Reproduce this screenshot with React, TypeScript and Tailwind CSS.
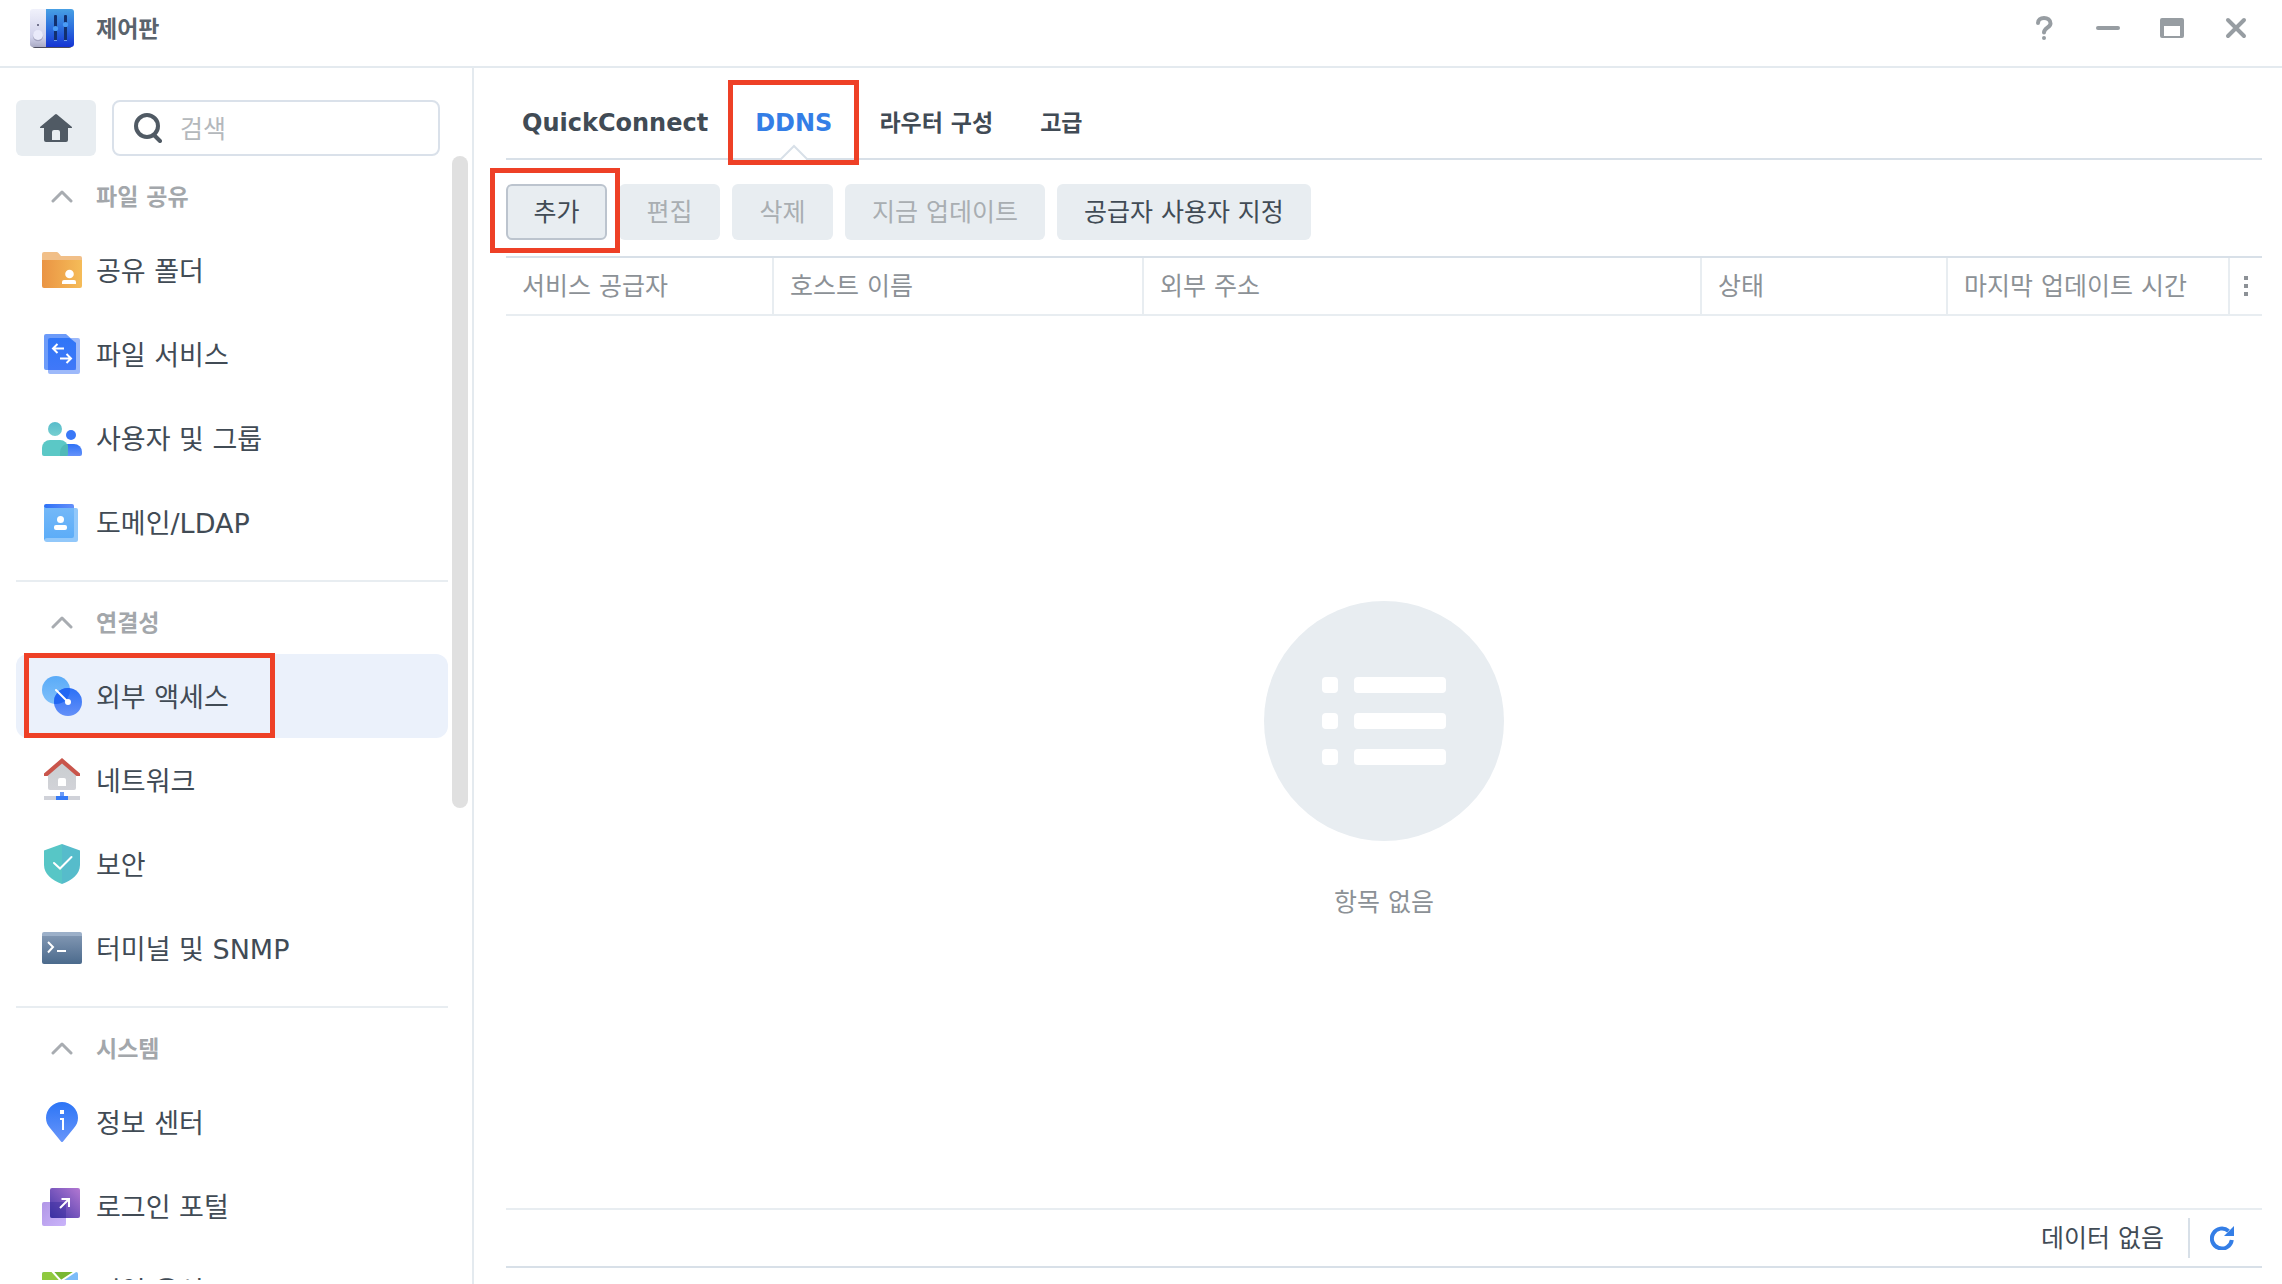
import type { ReactNode } from "react";

function ControlPanelLogo() {
  return (
    <svg width="44" height="42" viewBox="0 0 44 42" aria-hidden="true">
      <defs>
        <linearGradient id="cpLeft" x1="0" y1="0" x2="0" y2="1">
          <stop offset="0" stopColor="#f0f1fb" />
          <stop offset="0.75" stopColor="#d0d1ea" />
          <stop offset="1" stopColor="#a9aac4" />
        </linearGradient>
        <linearGradient id="cpRight" x1="0" y1="0" x2="0" y2="1">
          <stop offset="0" stopColor="#48a0e4" />
          <stop offset="0.5" stopColor="#2c6fdd" />
          <stop offset="1" stopColor="#1534d3" />
        </linearGradient>
      </defs>
      <rect x="2" y="33" width="40" height="6" rx="3" fill="#4c4c5c" />
      <path d="M16 0H3a3 3 0 0 0-3 3v32a3 3 0 0 0 3 3h13z" fill="url(#cpLeft)" />
      <path d="M16 0h25a3 3 0 0 1 3 3v32a3 3 0 0 1-3 3H16z" fill="url(#cpRight)" />
      <rect x="7" y="15" width="2" height="2" fill="#74758f" />
      <circle cx="8" cy="27" r="5.2" fill="#a3a4bf" />
      <circle cx="8" cy="26" r="5" fill="#e9eafa" />
      <rect x="24" y="6" width="3" height="26" rx="1" fill="#12306e" />
      <rect x="34" y="6" width="3" height="26" rx="1" fill="#12306e" />
      <circle cx="25.500" cy="19.500" r="2.600" fill="#4a9cf5" />
      <circle cx="35.500" cy="15.500" r="2.600" fill="#4a9cf5" />
      <rect x="24" y="31" width="3" height="1" fill="#7aa0e8" />
      <rect x="34" y="31" width="3" height="1" fill="#7aa0e8" />
    </svg>
  );
}

/* Sidebar icons share a 40 x 44 drawing area. */
function Icon({ children }: { children: ReactNode }) {
  return (
    <svg width="40" height="44" viewBox="0 0 40 44" fill="none" className="shrink-0" aria-hidden="true">
      {children}
    </svg>
  );
}

const SharedFolderIcon = (
  <Icon>
    <defs>
      <linearGradient id="sf" x1="0" x2="1" y1="0" y2="0">
        <stop stopColor="#ea9444" />
        <stop offset="1" stopColor="#f5bc58" />
      </linearGradient>
    </defs>
    <path d="M0 12V6a2 2 0 0 1 2-2h12.500a3 3 0 0 1 2 1L19 8h19a2 2 0 0 1 2 2v2z" fill="#f1bf88" />
    <path d="M0 12h40v26a2 2 0 0 1-2 2H2a2 2 0 0 1-2-2z" fill="url(#sf)" />
    <circle cx="27.500" cy="26" r="4.300" fill="#fff" />
    <path d="M20 36v-2a2 2 0 0 1 2-2h10a2 2 0 0 1 2 2v2z" fill="#fff" />
  </Icon>
);

const FileServiceIcon = (
  <Icon>
    <defs>
      <linearGradient id="fs" x1="0" x2="0" y1="0" y2="1">
        <stop stopColor="#2f75f7" />
        <stop offset="1" stopColor="#4078f8" />
      </linearGradient>
    </defs>
    <rect x="6" y="6" width="32" height="36" rx="2" fill="#9db9fa" />
    <path d="M4 2h20l10 9v27H4a2 2 0 0 1-2-2V4a2 2 0 0 1 2-2z" fill="#6c9bf9" />
    <path d="M8 6h19.500L34 11v25a2 2 0 0 1-2 2H6V8a2 2 0 0 1 2-2z" fill="url(#fs)" />
    <path d="M22 16.500H11M15.500 12 11 16.500l4.500 4.500M18 26.500h11M24.500 22l4.500 4.500-4.500 4.500" stroke="#fff" strokeWidth="2" />
  </Icon>
);

const UsersIcon = (
  <Icon>
    <defs>
      <linearGradient id="uh" x1="0" x2="0" y1="0" y2="1">
        <stop stopColor="#58bccb" />
        <stop offset="1" stopColor="#76cfd0" />
      </linearGradient>
      <linearGradient id="ub" x1="0" x2="0" y1="0" y2="1">
        <stop stopColor="#2e72f6" />
        <stop offset="1" stopColor="#6592fa" />
      </linearGradient>
    </defs>
    <circle cx="13" cy="13" r="7" fill="url(#uh)" />
    <circle cx="29" cy="19" r="5" fill="#3a78f7" />
    <path d="M18 40v-4a8 8 0 0 1 8-8h6a8 8 0 0 1 8 8v2a2 2 0 0 1-2 2z" fill="url(#ub)" />
    <path d="M0 38v-6a8 8 0 0 1 8-8h10a8 8 0 0 1 8 8v6a2 2 0 0 1-2 2H2a2 2 0 0 1-2-2z" fill="#5bc8c6" />
    <path d="M18 40v-4a8 8 0 0 1 7-7.900 8 8 0 0 1 1 3.900v6a2 2 0 0 1-2 2z" fill="#50b9b8" />
  </Icon>
);

const DomainIcon = (
  <Icon>
    <defs>
      <linearGradient id="dm" x1="0" x2="0" y1="0" y2="1">
        <stop stopColor="#75b9f8" />
        <stop offset="1" stopColor="#5bacf8" />
      </linearGradient>
      <linearGradient id="dt" x1="0" x2="1" y1="0" y2="0">
        <stop stopColor="#2d71f6" />
        <stop offset="1" stopColor="#648ffa" />
      </linearGradient>
    </defs>
    <path d="M4 4h26a2 2 0 0 1 2 2v4H2V6a2 2 0 0 1 2-2z" fill="url(#dt)" />
    <path d="M2 7q0 1 2 1h30a2 2 0 0 1 2 2v30a2 2 0 0 1-2 2H5a3 3 0 0 1-3-3z" fill="#92c8fa" />
    <path d="M2 6q0 2 2 2h28v28a2 2 0 0 1-2 2H5q-2 0-3 2z" fill="url(#dm)" />
    <circle cx="18.500" cy="19.500" r="3.500" fill="#fff" />
    <path d="M12 28v-1q0-2 2-2h9q2 0 2 2v1q0 2-2 2h-9q-2 0-2-2z" fill="#fff" />
  </Icon>
);

const ExternalAccessIcon = (
  <Icon>
    <defs>
      <linearGradient id="ea" x1="0" x2="0" y1="0" y2="1">
        <stop stopColor="#5aabf8" />
        <stop offset="1" stopColor="#7fc0fa" />
      </linearGradient>
      <linearGradient id="eb" x1="0" x2="0" y1="0" y2="1">
        <stop stopColor="#2b70f6" />
        <stop offset="1" stopColor="#6490f8" />
      </linearGradient>
      <clipPath id="ec">
        <circle cx="14" cy="16" r="14" />
      </clipPath>
    </defs>
    <circle cx="14" cy="16" r="14" fill="url(#ea)" />
    <circle cx="26" cy="28" r="14" fill="url(#eb)" />
    <circle cx="26" cy="28" r="14" fill="#2166f3" clipPath="url(#ec)" />
    <path d="m14 16 12 12" stroke="#fff" strokeWidth="2" strokeLinecap="round" />
    <circle cx="26" cy="28" r="3" fill="#fff" />
  </Icon>
);

const NetworkIcon = (
  <Icon>
    <defs>
      <linearGradient id="nw" x1="0" x2="0" y1="0" y2="1">
        <stop stopColor="#c9cdd0" />
        <stop offset="1" stopColor="#d2d3d8" />
      </linearGradient>
    </defs>
    <path d="M6 16 20 4l14 12v14a2 2 0 0 1-2 2H8a2 2 0 0 1-2-2z" fill="url(#nw)" />
    <path d="M2 18v-2.500L20 0l18 15.500V18h-3.500L20 5.500 5.500 18z" fill="#c9554b" />
    <path d="M16 28v-6a2 2 0 0 1 2-2h4a2 2 0 0 1 2 2v6z" fill="#fff" />
    <path d="M2 38h36v4H2z" fill="#d0d2d9" />
    <path d="M18 34h4v4h-4z" fill="#6c9bf8" />
    <path d="M14 38h12v4H14z" fill="#357af6" />
  </Icon>
);

const SecurityIcon = (
  <Icon>
    <path d="M20 2 2 8.500V23c0 9 8 15.500 18 19z" fill="#57c6c6" />
    <path d="m20 2 18 6.500V23c0 9-8 15.500-18 19z" fill="#56bccb" />
    <path d="m12 21 6 5.500L29.500 15" stroke="#fff" strokeWidth="2" strokeLinecap="round" />
  </Icon>
);

const TerminalIcon = (
  <Icon>
    <defs>
      <linearGradient id="tm" x1="0" x2="0" y1="0" y2="1">
        <stop stopColor="#7f95b1" />
        <stop offset="1" stopColor="#4b6a8c" />
      </linearGradient>
    </defs>
    <path d="M0 10V8a2 2 0 0 1 2-2h36a2 2 0 0 1 2 2v2z" fill="#9cb0c9" />
    <path d="M0 10h40v26a2 2 0 0 1-2 2H2a2 2 0 0 1-2-2z" fill="url(#tm)" />
    <path d="m6 16 5 5-5 5.500M15 25h9" stroke="#fff" strokeWidth="2" />
  </Icon>
);

const InfoIcon = (
  <Icon>
    <defs>
      <linearGradient id="if" x1="0" x2="0" y1="0" y2="1">
        <stop stopColor="#2c75f6" />
        <stop offset="1" stopColor="#6996fa" />
      </linearGradient>
    </defs>
    <path d="M20 2a16 16 0 0 1 16 16c0 4-1.500 7-4 10L21 41.500q-1 1-2 0L8 28c-2.500-3-4-6-4-10A16 16 0 0 1 20 2z" fill="url(#if)" />
    <path d="M18 10h4v4h-4zM18 18h4v12h-2V20h-2z" fill="#fff" />
  </Icon>
);

const LoginPortalIcon = (
  <Icon>
    <defs>
      <linearGradient id="lp" x1="0" x2="1" y1="1" y2="0">
        <stop stopColor="#4036a8" />
        <stop offset="1" stopColor="#b378d2" />
      </linearGradient>
      <linearGradient id="lq" x1="0" x2="1" y1="0" y2="1">
        <stop stopColor="#b196e6" />
        <stop offset="1" stopColor="#cab4fa" />
      </linearGradient>
    </defs>
    <rect x="0" y="18" width="24" height="24" rx="2" fill="url(#lq)" />
    <rect x="8" y="4" width="30" height="30" rx="2" fill="url(#lp)" />
    <path d="M8 18h14a2 2 0 0 1 2 2v14H10a2 2 0 0 1-2-2z" fill="#33279a" fillOpacity="0.400" />
    <path d="m18 24 9-9M19.500 15H27v8" stroke="#fff" strokeWidth="2" />
  </Icon>
);

const RegionIcon = (
  <Icon>
    <rect x="0" y="4" width="36" height="36" rx="2" fill="#7cbcf8" />
    <path d="M2 4h10l7 9L4 40H2a2 2 0 0 1-2-2V6a2 2 0 0 1 2-2z" fill="#8fc93f" />
    <path d="M12 4h20L20 14z" fill="#78b833" />
    <path d="m10 3 9 10L34 3" stroke="#fff" strokeWidth="2" />
  </Icon>
);

type NavItem = { label: string; icon: ReactNode; active?: boolean };

const groups: { title: string; items: NavItem[] }[] = [
  {
    title: "파일 공유",
    items: [
      { label: "공유 폴더", icon: SharedFolderIcon },
      { label: "파일 서비스", icon: FileServiceIcon },
      { label: "사용자 및 그룹", icon: UsersIcon },
      { label: "도메인/LDAP", icon: DomainIcon },
    ],
  },
  {
    title: "연결성",
    items: [
      { label: "외부 액세스", icon: ExternalAccessIcon, active: true },
      { label: "네트워크", icon: NetworkIcon },
      { label: "보안", icon: SecurityIcon },
      { label: "터미널 및 SNMP", icon: TerminalIcon },
    ],
  },
  {
    title: "시스템",
    items: [
      { label: "정보 센터", icon: InfoIcon },
      { label: "로그인 포털", icon: LoginPortalIcon },
      { label: "지역 옵션", icon: RegionIcon },
    ],
  },
];

function TitleBar() {
  return (
    <header className="flex h-[68px] shrink-0 items-center justify-between border-b-2 border-[#e4eaef] pr-[30px] pl-[30px]">
      <div className="flex items-center gap-[22px] pb-1.5">
        <ControlPanelLogo />
        <h1 className="pb-0.5 text-[23px] leading-8 font-bold text-[#5a636c]">제어판</h1>
      </div>
      <div className="flex items-center gap-8 pb-[10px] text-[#979da2]">
        <button type="button" aria-label="도움말" className="size-8">
          <svg width="32" height="32" viewBox="0 0 32 32" fill="none" stroke="currentColor" strokeWidth="4" strokeLinecap="round">
            <path d="M10 11c0-3 2.500-5 6-5s6.500 2 6.500 5.500c0 4-6.500 4.500-6.500 9" />
            <path d="M16 26v.01" />
          </svg>
        </button>
        <button type="button" aria-label="최소화" className="size-8">
          <svg width="32" height="32" viewBox="0 0 32 32" fill="currentColor">
            <rect x="4" y="14" width="24" height="4" rx="2" />
          </svg>
        </button>
        <button type="button" aria-label="최대화" className="size-8">
          <svg width="32" height="32" viewBox="0 0 32 32" fill="currentColor">
            <path fillRule="evenodd" d="M6 6h20a2 2 0 0 1 2 2v16a2 2 0 0 1-2 2H6a2 2 0 0 1-2-2V8a2 2 0 0 1 2-2zm2 8v10h16V14z" />
          </svg>
        </button>
        <button type="button" aria-label="닫기" className="size-8">
          <svg width="32" height="32" viewBox="0 0 32 32" fill="none" stroke="currentColor" strokeWidth="4" strokeLinecap="round">
            <path d="m8 8 16 16M24 8 8 24" />
          </svg>
        </button>
      </div>
    </header>
  );
}

function Sidebar() {
  return (
    <aside className="flex w-[474px] shrink-0 flex-col border-r-2 border-[#e4eaef] pt-8 pb-1 pl-4">
      <div className="flex shrink-0 gap-4 pr-8">
        <button type="button" aria-label="홈" className="flex h-14 w-20 items-center justify-center rounded-md bg-[#e8edf1]">
          <svg width="32" height="28" viewBox="0 0 32 28" fill="#505a64" aria-hidden="true">
            <path fillRule="evenodd" d="M15 .500a1.500 1.500 0 0 1 2 0L32 13q.500 1-1 1h-3v12a2 2 0 0 1-2 2H6a2 2 0 0 1-2-2V14H1q-1.500 0-1-1zM14 16a2 2 0 0 0-2 2v8h8v-8a2 2 0 0 0-2-2z" />
          </svg>
        </button>
        <label className="flex h-14 flex-1 items-center gap-[18px] rounded-lg border-2 border-[#dae1ea] pl-5">
          <svg width="28" height="30" viewBox="0 0 28 30" fill="none" stroke="#505a64" strokeWidth="4" aria-hidden="true" className="shrink-0">
            <circle cx="13" cy="13" r="11" />
            <path d="m20.500 22.500 5.500 5.500" strokeLinecap="round" />
          </svg>
          <input
            type="search"
            aria-label="검색"
            placeholder="검색"
            className="w-full min-w-0 bg-transparent pt-1 text-[25px] leading-9 text-[#414b55] outline-none placeholder:text-[#b4b8bc]"
          />
        </label>
      </div>
      <div className="flex min-h-0 flex-1 gap-1 pr-1">
        <nav className="min-w-0 flex-1 overflow-hidden">
          {groups.map((group, i) => (
            <section key={group.title} className={i > 0 ? "mt-4 border-t-2 border-[#e8edf1]" : ""}>
              <button type="button" aria-expanded="true" className="flex h-[72px] w-full items-center gap-[23px] pt-2 pl-[35px] text-[23px] leading-8 font-bold text-[#a3a7ab]">
                <svg width="22" height="14" viewBox="0 0 22 14" fill="none" stroke="#a8acb1" strokeWidth="3" strokeLinecap="round" strokeLinejoin="round" aria-hidden="true">
                  <path d="m2 12 9-9 9 9" />
                </svg>
                <span className="pt-0.5">{group.title}</span>
              </button>
              <ul>
                {group.items.map((item) => (
                  <li key={item.label} className="relative">
                    <a
                      href="#"
                      aria-current={item.active ? "page" : undefined}
                      className={
                        "flex h-[84px] items-center gap-[14px] rounded-xl pl-[26px] text-[27px] leading-10 text-[#414b55] " +
                        (item.active ? "bg-[#ebf1fb]" : "")
                      }
                    >
                      {item.icon}
                      <span className="pt-1">{item.label}</span>
                    </a>
                    {item.active && (
                      <span className="pointer-events-none absolute -top-px left-2 h-[85px] w-[251px] border-5 border-[#ee4026]" />
                    )}
                  </li>
                ))}
              </ul>
            </section>
          ))}
        </nav>
        <div className="w-4">
          <div className="h-[58%] rounded-full bg-[#e0e0e0]" />
        </div>
      </div>
    </aside>
  );
}

const tabs = ["QuickConnect", "DDNS", "라우터 구성", "고급"];

function Tabs() {
  return (
    <div role="tablist" className="flex h-[92px] shrink-0 gap-[47px] border-b-2 border-[#d8e0e8] pl-4 font-bold text-[#414b55]">
      {tabs.map((tab) => {
        const active = tab === "DDNS";
        const latin = /^[A-Za-z]/.test(tab);
        return (
          <button
            key={tab}
            type="button"
            role="tab"
            aria-selected={active}
            className={
              "relative pt-5 leading-8 " +
              (latin ? "text-[24px] " : "text-[23px] ") +
              (active ? "text-[#347ee6]" : "")
            }
          >
            {tab}
            {active && (
              <>
                <svg width="28" height="16" viewBox="0 0 28 16" className="absolute -bottom-[2px] left-1/2 -translate-x-1/2" aria-hidden="true">
                  <path d="M2 14 14 2l12 12v2H2z" fill="#fff" />
                  <path d="M1 15 14 2l13 13" fill="none" stroke="#d8e0e8" strokeWidth="2" />
                </svg>
                <span className="pointer-events-none absolute -inset-x-[27px] top-3 h-[85px] border-5 border-[#ee4026]" />
              </>
            )}
          </button>
        );
      })}
    </div>
  );
}

const actions = [
  { label: "추가", disabled: false, marked: true },
  { label: "편집", disabled: true, marked: false },
  { label: "삭제", disabled: true, marked: false },
  { label: "지금 업데이트", disabled: true, marked: false },
  { label: "공급자 사용자 지정", disabled: false, marked: false },
];

function Toolbar() {
  return (
    <div className="flex shrink-0 gap-3 py-6 pb-4 text-[25px] leading-9">
      {actions.map((action) => (
        <div key={action.label} className={action.marked ? "relative z-10" : ""}>
          <button
            type="button"
            disabled={action.disabled}
            className={
              "h-14 min-w-[101px] rounded-md border-2 bg-[#e8edf1] px-[25px] pt-0.5 " +
              (action.disabled ? "text-[#a9aeb2] " : "text-[#414b55] ") +
              (action.marked ? "border-[#bcc4ce]" : "border-transparent")
            }
          >
            {action.label}
          </button>
          {action.marked && (
            <span className="pointer-events-none absolute -top-4 -left-4 h-[85px] w-[130px] border-5 border-[#ee4026]" />
          )}
        </div>
      ))}
    </div>
  );
}

const columns = [
  { label: "서비스 공급자", width: "w-[268px]" },
  { label: "호스트 이름", width: "w-[370px]" },
  { label: "외부 주소", width: "" },
  { label: "상태", width: "w-[246px]" },
  { label: "마지막 업데이트 시간", width: "w-[282px]" },
];

function DdnsTable() {
  return (
    <div className="shrink-0 border-t-2 border-b-2 border-t-[#d8e0e8] border-b-[#e8edf1]">
      <table className="w-full table-fixed border-separate border-spacing-0 text-left text-[25px] leading-9 text-[#8c9196]">
        <thead>
          <tr className="h-14">
            {columns.map((column) => (
              <th key={column.label} scope="col" className={"border-r-2 border-[#e8edf1] pt-0.5 pr-2 pl-4 font-normal whitespace-nowrap " + column.width}>
                {column.label}
              </th>
            ))}
            <th scope="col" className="w-8">
              <button type="button" aria-label="열 옵션" className="flex w-full justify-center">
                <svg width="4" height="20" viewBox="0 0 4 20" fill="#8c9196" aria-hidden="true">
                  <path d="M0 0h4v4H0zM0 8h4v4H0zM0 16h4v4H0z" />
                </svg>
              </button>
            </th>
          </tr>
        </thead>
      </table>
    </div>
  );
}

function EmptyState() {
  return (
    <div className="flex flex-1 flex-col items-center justify-center gap-10">
      <svg width="240" height="240" viewBox="0 0 240 240" aria-hidden="true">
        <circle cx="120" cy="120" r="120" fill="#e8edf1" />
        <g fill="#fff">
          <rect x="58" y="76" width="16" height="16" rx="4" />
          <rect x="90" y="76" width="92" height="16" rx="4" />
          <rect x="58" y="112" width="16" height="16" rx="4" />
          <rect x="90" y="112" width="92" height="16" rx="4" />
          <rect x="58" y="148" width="16" height="16" rx="4" />
          <rect x="90" y="148" width="92" height="16" rx="4" />
        </g>
      </svg>
      <p className="pt-0.5 text-[25px] leading-10 text-[#8c9196]">항목 없음</p>
    </div>
  );
}

function StatusBar() {
  return (
    <footer className="flex h-[60px] shrink-0 items-center justify-end border-t-2 border-b-2 border-t-[#e8edf1] border-b-[#d8e0e8] pr-7 text-[25px] leading-9 text-[#414b55]">
      <span className="pt-0.5 pr-6">데이터 없음</span>
      <button type="button" aria-label="새로 고침" className="flex h-10 items-center border-l-2 border-[#d8e0e8] pl-5">
        <svg width="24" height="24" viewBox="0 0 24 24" fill="none" aria-hidden="true">
          <path d="M21.800 14A10 10 0 1 1 18.500 5" stroke="#347ee6" strokeWidth="4" />
          <path d="M24 0v10H14z" fill="#347ee6" />
        </svg>
      </button>
    </footer>
  );
}

export default function App() {
  return (
    <div className="flex h-screen flex-col overflow-hidden bg-white font-['DejaVu_Sans','Noto_Sans_CJK_KR',sans-serif]" lang="ko">
      <TitleBar />
      <div className="flex min-h-0 flex-1">
        <Sidebar />
        <main className="flex min-w-0 flex-1 flex-col pr-5 pb-4 pl-8">
          <Tabs />
          <Toolbar />
          <DdnsTable />
          <EmptyState />
          <StatusBar />
        </main>
      </div>
    </div>
  );
}
